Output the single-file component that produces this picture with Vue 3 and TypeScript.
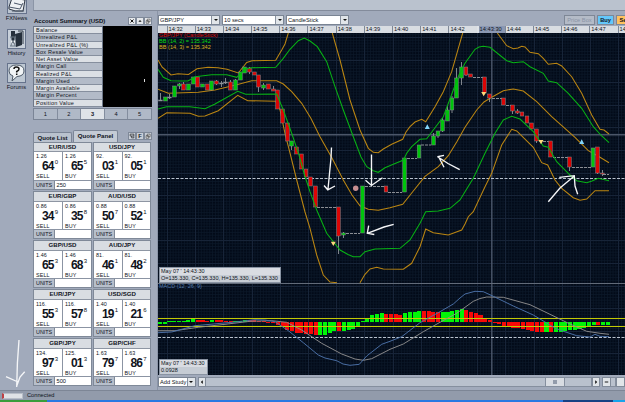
<script setup lang="ts">
interface Quote {
  pair: string
  base: string
  base2: string
  sell: string
  sellPip: string
  buy: string
  buyPip: string
  units: string
}

const accountRows: string[] = [
  'Balance', 'Unrealized P&L', 'Unrealized P&L (%)', 'Box Resale Value', 'Net Asset Value',
  'Margin Call', 'Realized P&L', 'Margin Used', 'Margin Available', 'Margin Percent', 'Position Value',
]

const q = (pair: string, base: string, base2: string, sell: string, sellPip: string, buy: string, buyPip: string, units = ''): Quote =>
  ({ pair, base, base2, sell, sellPip, buy, buyPip, units })

const quotes: Quote[] = [
  q('EUR/USD', '1.26', '1.26', '64', '0', '65', '5', '250'),
  q('USD/JPY', '92.', '92.', '03', '1', '05', '1'),
  q('EUR/GBP', '0.86', '0.86', '34', '9', '35', '8'),
  q('AUD/USD', '0.88', '0.88', '50', '7', '52', '1'),
  q('GBP/USD', '1.46', '1.46', '65', '3', '68', '3'),
  q('AUD/JPY', '81.', '81.', '46', '1', '48', '2'),
  q('EUR/JPY', '116.', '116.', '55', '3', '57', '8'),
  q('USD/SGD', '1.40', '1.40', '19', '1', '21', '6'),
  q('GBP/JPY', '134.', '125.', '97', '3', '01', '3', '500'),
  q('GBP/CHF', '1.63', '1.63', '79', '7', '86', '7'),
]

const times: string[] = [
  '14:32', '14:33', '14:34', '14:35', '14:36', '14:37', '14:38', '14:39',
  '14:40', '14:41', '14:42', '14:43:30', '14:44', '14:45', '14:46', '14:47', '14:48',
]

const majorX: number[] = Array.from({ length: 17 }, (_, i) => 167 + Math.round(i * 28.2))
const majorY: number[] = Array.from({ length: 15 }, (_, i) => 37 + Math.round(i * 22.6))

/* x centre, body top, body bottom, colour, wick top, wick bottom */
type Candle = [number, number, number, 'g' | 'r' | 'x', number?, number?]
const candles: Candle[] = [
  [160.5, 100, 101, 'x', 93, 101], [165.5, 97, 101, 'g'], [169.5, 97, 98, 'x', 94, 99],
  [174.5, 86, 97, 'g'], [179.5, 84, 86, 'g', 83, 89], [183.5, 84, 90, 'r', 82, 90], [188.5, 84, 90, 'g'],
  [193.5, 77, 84, 'g'], [197.5, 77, 87, 'r'], [202.5, 84, 87, 'g'], [207.5, 84, 90, 'r'],
  [211.5, 81, 90, 'g'], [216.5, 81, 84, 'r', 80, 85], [221.5, 83, 84, 'x', 81, 87], [225.5, 82, 83, 'x', 78, 84],
  [230.5, 82, 90, 'r', 80, 90], [235.5, 80, 90, 'g', 79, 90], [240.5, 72, 80, 'g'], [244.5, 67, 73, 'g'],
  [249.5, 68, 72, 'r', 67, 74], [254.5, 72, 75, 'r'], [258.5, 75, 87, 'r', 75, 92], [263.5, 85, 88, 'g', 83, 90],
  [268.5, 84, 89, 'r'], [273.5, 89, 91, 'r', 86, 91], [277.5, 90, 109, 'r'], [282.5, 109, 123, 'r'],
  [287.5, 123, 141, 'r'], [291.5, 141, 146, 'g', 141, 150], [296.5, 147, 154, 'r'], [301.5, 154, 169, 'r'],
  [306, 169, 177, 'r'], [310.5, 177, 186, 'r'], [315.5, 186, 207, 'r'], [338.5, 207, 236, 'r', 207, 254],
  [343.5, 233, 235, 'g', 232, 238], [362.5, 186, 233, 'g'], [386, 186, 192, 'r'], [404.5, 158, 192, 'g'],
  [419, 145, 158, 'g'], [433.5, 136, 145, 'g', 133, 145], [438, 131, 136, 'g', 131, 138], [442.5, 120, 131, 'g', 118, 132],
  [447.5, 110, 121, 'g', 106, 121], [452, 98, 110, 'g', 96, 113], [456.5, 78, 98, 'g', 68, 98],
  [461.5, 67, 78, 'g', 62, 85], [466, 67, 75, 'r', 67, 76], [470.5, 74, 77, 'r'], [484.5, 77, 93, 'r'],
  [489.5, 94, 98, 'r', 94, 102], [503.5, 98, 105, 'r'], [512.5, 105, 111, 'r', 105, 114], [517.5, 111, 113, 'r', 109, 114],
  [522, 112, 116, 'r'], [527, 116, 123, 'r'], [531.5, 123, 129, 'r'], [536.5, 129, 141, 'r', 129, 143],
  [550.5, 141, 157, 'r'], [569.5, 157, 167, 'r', 157, 171], [593, 148, 167, 'g'], [597.5, 147, 173, 'r', 147, 174],
  [602.5, 173, 174, 'r', 170, 176],
]

/* levels without trades: x from, x to, y */
const flats: [number, number, number][] = [
  [317, 336, 207.5], [346, 360, 233.5], [365, 384, 186.5], [388, 402, 192.5], [407, 417, 158.5], [421, 431, 145],
  [473, 483, 77.5], [492, 502, 98.5], [506, 511, 105.5], [539, 549, 141.5], [553, 568, 157.5], [572, 591, 167.5], [603, 609, 174.5],
]

const upperOuter1 = '158,60 162,67 171,75 178,73.7 188.5,74.5 197,68.7 208,67.3 218,67.7 227,69.3 238.3,73 246.7,62.5 252,60.7 275.7,60.3 281.7,50 285,44 288.3,33'
const upperOuter2 = '332.3,33 340,60 350,100 360,130 368.3,148.3 373.3,152.3 378.3,152.7 383.3,149 391.7,144.3 402.7,139.3 406,132 410,126.7 415,122 421.7,119.3 425.7,121.7 435,106.7 443.3,91.7 451.7,71.7 458.3,48.3 462.7,33'
const upperOuter3 = '497.3,33 506.7,45.7 513.3,48.7 518,48 521.7,46.3 525,47 530,52.3 538.3,53.7 543.3,58.3 548.3,64.3 556.7,63.3 561.7,66 571.7,76.7 581.7,93.3 591.7,115 600,129.3 604,130 609,134'
const upperInner = '158,69.3 163.3,77.3 171,80.7 180,81 188,81 195,76.7 211.7,74.7 226.7,74.7 236.7,77.3 245,69.3 251.7,67.7 275.7,67.3 283.3,58.3 290,49.3 298.3,40.7 304.3,38 310,41 317.3,46.7 326.7,61.7 335,86.7 343.3,110 353.3,136.7 361,157 366.7,166.7 373.3,170.7 378.3,172.3 385,167.7 393.3,164.3 403.5,160 406.7,153.3 411.7,146.7 420,139.3 426.7,138.7 433.3,130 443.3,116.7 453.3,90 459,75 465,63.3 475,49.3 479,47 483.3,46.3 490,47.3 506.7,60.7 513.3,62.7 523.3,61.7 530,66.7 543.3,73.3 548.3,81 556.7,82.7 568.3,93.3 581.7,108.3 593.3,126.7 601.7,136 609,142.7'
const middle = '158,89.3 168.3,93.3 198.3,92.3 215,90 236.7,84.7 251.7,80.7 276.7,80.7 283.3,84 291.7,91.7 301.7,103.3 311,118.5 320,136.7 331.7,157.5 343.3,180 352,195 360,205.7 368.3,209.3 378.3,210.3 390,207.7 402.7,204.3 413.3,191 425,176.3 438.3,166.7 448.3,155.7 456.7,142 465,127.3 476.7,110 484,102 491.7,97.3 503.3,90.7 513.3,89 523.3,91 536.7,101.7 551.7,116.7 575,137.3 588.3,150.7 600,157.3 609,162.7'
const lowerInner = '158,109 166.7,106.7 190,106.7 205,108.7 215,104 237.7,91.3 245.7,94.3 276.7,94 283.3,110 291.7,133.3 299,155 304.5,175 310,191.7 316.7,210 326.7,233.3 340,250 348,254.5 353.3,256.7 360,256.7 365,251.7 375,249 400,248.3 410,240 420,223.3 425.7,211.7 438.3,211 450,208.3 460,200 465,191.7 473.3,178.3 485,153.3 495,133.3 503.3,120 511.7,116.3 520,119 533.3,131.7 543.3,146 548.3,147.3 556.7,161.7 570,175 576.7,180.7 586.7,182.7 592,181 598.3,178.3 609,180.7'
const lowerOuter1 = '158,118.3 166.7,112.7 190,113.3 198.3,116.3 205,116 218.3,110.7 237.7,95.3 247.7,100.7 275.7,101.3 280,110 285,133.3 290.5,155 296.7,180 305,212 310,228.3 316.7,255 323.3,275 330,282 337,282.7'
const lowerOuter2 = '360,282.7 365,274.3 370,269 376.7,267.3 383.3,269 403.3,269.3 411.7,263.3 420,246.7 425.7,229 433.3,232.7 448.3,235 461.7,230 465,224 468.3,216.7 473.3,211.7 485,186.7 491.7,173.3 501.7,145 511.7,129.3 516.7,131 533.3,147.3 541.7,162.7 547.7,165 555,180 561.7,188.3 573.3,197.7 580,200.3 586.7,199 595,190.7 609,190.7'

const outerLines = [upperOuter1, upperOuter2, upperOuter3, middle, lowerOuter1, lowerOuter2]

const macdLine = '158,332.7 171.7,332 195,325.7 235,322 255,319.7 265,320 275,321.7 288.3,330.7 303.3,342.7 318.3,355 325,358 336.7,360.7 343,364 350,365.3 359.3,364.3 366.7,356 381.7,344.3 390,341.3 401.7,336.7 420,322.7 440,311.7 453.3,304 460,298 465,294 475,291.3 483.3,291.7 493.3,296.3 513.3,306 533.3,315 556.7,329 576.7,335.7 590,337 595,334.3 600,336.3 609,336.7'
const signalLine = '158,330.7 175,330.7 198.3,327.3 225,324.3 250,321.3 271.7,320.7 286.7,322.3 301.7,330 321.7,343.3 341.7,354 355,359 363.3,360.3 371.7,358.7 390,349.3 403.3,344 423.3,331.7 440,322.3 456.7,313.3 473.3,301.3 480,298.5 486.7,297 503.3,297.3 530,304.7 550,314.3 570,324 586.7,331.3 600,333.3 609,334.3'

const heights: number[] = [
  -2.3, -1.7, 0.7, 1, 1, 1.3, 1.7, 2.7, 1.7, 1.7, 1.3, 1.7, 1.7, 1.7, 1.3, 1, 1, 1.3, 1.7, 2, 2, 1.3, 0.7, -0.7, -1, -3,
  -5, -8.3, -9.3, -10.7, -10.7, -11.7, -12.3, -13.3, -13.3, -12.7, -11, -9.3, -9.3, -9, -8, -7, -4.3, 1, 3.7, 6.7, 7.7, 8.7,
  8, 8, 8, 6.7, 9.3, 9.7, 9.7, 11, 11.3, 10.7, 9.7, 9.7, 9.7, 9.7, 10.7, 11.7, 12.7, 11.7, 9.7, 8.7, 6.7, 3.3, 1.7,
  -1, -2.3, -4, -5, -6, -6.3, -7.3, -8, -9, -10, -10, -10, -10, -10, -10, -9.3, -8.3, -8.3, -7.3, -6.3, -4.7, -3, -3, -3, -3,
]
const tones =
  'gggggggg' + 'rrr' + 'g' + 'rrrr' + 'ggg' + 'rrrrrrrrrrrrrrr' + 'gggg' + 'r' + 'ggggggggg' + 'rrrr' + 'gggg' + 'rrrr' + 'ggggg' +
  'rrrrrrrrrrrrrrrrr' + 'g' + 'r' + 'ggggggggg' + 'r' + 'gg'
const bars = heights.map((h, i) => ({
  x: 158 + i * 4.713,
  y: h > 0 ? 322 - h : 322,
  h: Math.abs(h),
  tone: tones[i],
}))
</script>

<template>
  <div class="app">
    <div class="main">
      <nav class="sidebar">
        <div class="tool news">
          <svg width="20" height="20" viewBox="0 0 20 20">
            <rect x=".5" y=".5" width="19" height="19" fill="#bcc5d1" stroke="#66738c" />
            <path d="M2 13L5 4L18 6L16 17Q8 18 2 15Z" fill="#eef1f4" stroke="#2d3542" />
            <path d="M2 13L13 15L16 9M7 9L15 11M5 17H17" fill="none" stroke="#4c586a" />
          </svg>
          <span>FXNews</span>
        </div>
        <div class="tool history">
          <svg width="19" height="20" viewBox="0 0 19 20">
            <rect x=".5" y=".5" width="18" height="19" fill="#c8d0da" stroke="#66738c" />
            <path d="M4 2L8 2V15L4 13ZM8 5L15 3V16L9 18Z" fill="#26303c" />
            <path d="M11 2H16V15" fill="none" stroke="#323d49" />
            <path d="M3 8H9M3 17H9M4 8Q4 11 6 12.5Q4 14 4 17M8 8Q8 11 6 12.5Q8 14 8 17" fill="#f2f5f7" stroke="#6d7a87" />
          </svg>
          <span>History</span>
        </div>
        <div class="tool forums">
          <svg width="19" height="20" viewBox="0 0 19 20">
            <rect x=".5" y=".5" width="18" height="19" fill="#bdc7d2" stroke="#66738c" />
            <path d="M9.5 2Q17 2 17 8Q17 13 10 13.5L5 18L6 13Q2 12 2 8Q2 2 9.5 2Z" fill="#f1f4f6" stroke="#4c5867" />
            <path d="M7 6Q7 4 9.3 4Q12 4 12 6Q12 7.4 9.7 8.5V9.5M9.7 10.6V12" fill="none" stroke="#111" stroke-width="1.5" />
          </svg>
          <span>Forums</span>
        </div>
        <svg class="sketch" width="26" height="50" viewBox="0 338 26 50">
          <path d="M19 340L17.4 363L16.7 387M6 376.7L18 382M16.7 386L20 377L24.7 371.7" />
        </svg>
      </nav>

      <div class="workspace">
        <div class="top-strip"></div>
        <div class="body">
          <aside class="panels">
            <div class="panel-head">
              <span class="title">Account Summary (USD)</span>
              <span class="mini">
                <svg viewBox="0 0 7 8"><path d="M1.5 2L5.5 6M5.5 2L1.5 6" stroke="#111" stroke-width="1.3" /></svg>
              </span>
              <span class="mini">
                <svg viewBox="0 0 7 8"><path d="M1.3 5L3.5 2.8L5.7 5Z" fill="#111" /></svg>
              </span>
              <span class="mini">
                <svg viewBox="0 0 7 8"><path d="M2.5 1.5H6.3V5H2.5ZM1 3.5H4.5V7H1Z" fill="#eee" stroke="#222" stroke-width=".7" /></svg>
              </span>
            </div>
            <div class="account">
              <div class="labels">
                <div v-for="row in accountRows" :key="row" class="row">{{ row }}</div>
              </div>
              <div class="redacted"><i></i></div>
            </div>
            <div class="pager">
              <span v-for="n in 5" :key="n" :class="{ on: n === 3 }">{{ n }}</span>
            </div>
            <div class="tabs">
              <span class="tab">Quote List</span>
              <span class="tab on">Quote Panel</span>
              <span class="grow"></span>
              <span class="mini dim">
                <svg viewBox="0 0 7 8"><path d="M1 1.5H6V4H1ZM3 4V6.5H6V4.5" fill="none" stroke="#111" stroke-width=".8" /></svg>
              </span>
              <span class="mini dim">F</span>
              <span class="mini dim">
                <svg viewBox="0 0 7 8"><path d="M2.5 1.5H6.3V5H2.5ZM1 3.5H4.5V7H1Z" fill="#eee" stroke="#222" stroke-width=".7" /></svg>
              </span>
            </div>
            <div class="quotes">
              <div v-for="c in quotes" :key="c.pair" class="card">
                <div class="pair">{{ c.pair }}</div>
                <div class="prices">
                  <div class="side">
                    <small>{{ c.base }}</small>
                    <b>{{ c.sell }}<sup>{{ c.sellPip }}</sup></b>
                    <small>SELL</small>
                  </div>
                  <div class="side">
                    <small>{{ c.base2 }}</small>
                    <b>{{ c.buy }}<sup>{{ c.buyPip }}</sup></b>
                    <small>BUY</small>
                  </div>
                </div>
                <div class="units"><span>UNITS</span><em>{{ c.units }}</em></div>
              </div>
            </div>
          </aside>

          <section class="chart-area">
            <div class="toolbar">
              <div class="select pair-select"><span>GBP/JPY</span><i></i></div>
              <div class="select secs"><span>10 secs</span><i></i></div>
              <div class="select kind"><span>CandleStick</span><i></i></div>
              <span class="grow"></span>
              <span class="btn price">Price Box</span>
              <span class="btn buy">Buy</span>
              <span class="btn sell">Sell</span>
            </div>
            <div class="axis">
              <span v-for="t in times" :key="t" :class="{ cursor: t.length > 5 }">{{ t }}</span>
            </div>
            <div class="plot">
              <svg width="467" height="342" viewBox="158 33 467 342">
                <defs>
                  <pattern id="fine" x="167" y="37" width="2.82" height="2.825" patternUnits="userSpaceOnUse">
                    <path d="M0 .4H2.82M.4 0V2.83" stroke="#0b1828" stroke-width=".8" />
                  </pattern>
                </defs>
                <rect x="158" y="33" width="467" height="342" fill="#020a18" />
                <rect x="158" y="33" width="467" height="342" fill="url(#fine)" />
                <g shape-rendering="crispEdges" stroke="#172438">
                  <path v-for="x in majorX" :key="'x' + x" :d="`M${x + 0.5} 33V375`" />
                  <path v-for="y in majorY" :key="'y' + y" :d="`M158 ${y + 0.5}H625`" />
                </g>
                <path d="M158 134.8H625M491.8 33V375" stroke="#4b5669" stroke-width="1.4" />
                <path d="M158 178.5H625M158 337.5H625" stroke="#b9c2ce" stroke-dasharray="3 1.5" />
                <g fill="none" stroke-width="1.05">
                  <polyline v-for="(p, i) in outerLines" :key="i" :points="p" stroke="#bb8612" />
                </g>
                <path v-for="(f, i) in flats" :key="'f' + i" :d="`M${f[0]} ${f[2]}H${f[1]}`" stroke="#8b8e94" stroke-dasharray="3 1" />
                <g v-for="(c, i) in candles" :key="'c' + i">
                  <path v-if="c[4] !== undefined" :d="`M${c[0]} ${c[4]}V${c[5]}`" stroke="#8e9399" stroke-width=".9" />
                  <rect
                    :x="c[0] - 1.8" :y="c[1]" width="3.6" :height="c[2] - c[1]"
                    :fill="c[3] === 'g' ? '#00c40c' : c[3] === 'r' ? '#dc0505' : '#9a9ea5'"
                    stroke="#80868a" stroke-width=".5"
                  />
                </g>
                <polyline :points="upperInner" fill="none" stroke="#07b214" stroke-width="1.05" />
                <polyline :points="lowerInner" fill="none" stroke="#07b214" stroke-width="1.05" />
                <path d="M330.8 241.7h5L333.3 246ZM481.2 92h5L483.7 96.3ZM538.5 140h5L541 144.3Z" fill="#ffd77b" />
                <path d="M424.8 129h5L427.3 124.2ZM579.2 144h5L581.7 139.2Z" fill="#82d5fa" />
                <circle cx="355.7" cy="188.3" r="2.7" fill="#c68e91" />

                <rect x="158" y="283" width="467" height="1" fill="#626b79" />
                <g shape-rendering="crispEdges">
                  <rect v-for="(b, i) in bars" :key="'b' + i" :x="b.x" :y="b.y" width="4.1" :height="b.h" :fill="b.tone === 'g' ? '#00f507' : '#f80808'" />
                </g>
                <path d="M158 318.5H625M158 326.5H625" stroke="#c3c904" />
                <polyline :points="signalLine" fill="none" stroke="#8d8c8c" stroke-width=".95" />
                <polyline :points="macdLine" fill="none" stroke="#4c72aa" stroke-width=".95" />

                <g class="ink">
                  <path d="M331.5 147.5L331 158L328 189M324 185.5L327.8 189.8L335 186" />
                  <path d="M371.5 154.5V185.5M365.5 180.3L371.5 185.5L382.5 177.7" />
                  <path d="M393.7 224.3L384 227L367.3 233.3M368.7 225.7L367.3 233.3L374.3 234.5" />
                  <path d="M459.7 169.7L448 163.5L437.3 156.5M444 155.3L438.5 156.5L444 167.3" />
                  <path d="M548.3 201.7L560 188L574.3 176M559.3 177.3L574.3 175.7L575 186L577.7 194.3" />
                </g>
              </svg>
              <div class="legend">
                <div class="red">GBP/JPY (CandleStick)</div>
                <div class="green">BB (14, 2) = 135.342</div>
                <div class="gold">BB (14, 3) = 135.342</div>
              </div>
              <div class="tip ohlc">
                <div>May 07 ' 14:43:30</div>
                <div>O=135.330, C=135.330, H=135.330, L=135.330</div>
              </div>
              <div class="macd-name">MACD (12, 26, 9)</div>
              <div class="tip macd-tip">
                <div>May 07 ' 14:43:30</div>
                <div>0.0928</div>
              </div>
            </div>
            <div class="scroll">
              <div class="select study"><span>Add Study</span><i></i></div>
              <span class="step prev"><svg viewBox="0 0 8 9"><path d="M5 2V7L2.5 4.5Z" /></svg></span>
              <div class="track"><span class="thumb"><i></i></span></div>
              <span class="step next"><svg viewBox="0 0 8 9"><path d="M3 2V7L5.5 4.5Z" /></svg></span>
              <span class="step minus"><svg viewBox="0 0 8 9"><path d="M2 4H6V5H2Z" /></svg></span>
              <span class="zoom-track"></span>
              <span class="step last"></span>
            </div>
          </section>
        </div>
      </div>
    </div>
    <footer class="status">
      <span class="meter"></span>
      <span>Connected</span>
    </footer>
    <div class="taskbar"><span class="start"></span><span class="grow"></span><span class="task"></span><span class="tray"></span></div>
  </div>
</template>

<style>
html,
body {
  margin: 0;
  overflow: hidden;
}
</style>

<style scoped>
* {
  box-sizing: border-box;
}
.app {
  width: 625px;
  height: 402px;
  overflow: hidden;
  display: flex;
  flex-direction: column;
  background: #a1aabb;
  color: #10141c;
  font: 5.7px/7px 'Liberation Sans', Arial, sans-serif;
  white-space: nowrap;
}
.grow {
  flex: 1;
}
.main {
  display: flex;
  height: 390px;
}
.sidebar {
  width: 33px;
  display: flex;
  flex-direction: column;
}
.tool {
  display: flex;
  flex-direction: column;
  align-items: center;
  height: 34px;
  flex: none;
  line-height: 8px;
}
.tool svg {
  display: block;
  flex: none;
}
.news {
  margin-top: -6px;
}
.history {
  margin-top: 1px;
}
.sketch {
  margin-top: auto;
  margin-bottom: 2px;
}
.sketch path,
.ink path {
  fill: none;
  stroke: #f5f6f8;
  stroke-width: 1.35;
}
.workspace {
  flex: 1;
  min-width: 0;
}
.top-strip {
  height: 11px;
  background: #bac2ce;
  border-left: 1px solid #8b95a6;
  border-bottom: 1px solid #838b9b;
}
.body {
  display: flex;
  height: 379px;
}
.panels {
  width: 125px;
  padding: 5px 6px 0 0;
  border-right: 1px solid #8a94a7;
  flex: none;
}
.panel-head {
  display: flex;
  align-items: center;
  height: 10px;
  width: 119px;
}
.title {
  flex: 1;
  padding-left: 1px;
  font-size: 6px;
  font-weight: 700;
}
.mini {
  width: 8px;
  flex: none;
  height: 8px;
  background: #e4e7eb;
  border: 0.5px solid #7f8999;
  font-weight: 700;
  text-align: center;
  line-height: 7px;
}
.mini svg {
  display: block;
  width: 100%;
  height: 100%;
}
.mini.dim {
  background: #c8ced7;
}
.account {
  display: flex;
  height: 81px;
  width: 119px;
}
.labels {
  width: 70px;
  display: flex;
  flex-direction: column;
  border: 1px solid #6e7889;
  border-bottom: 0;
}
.row {
  flex: 1 1 0;
  min-height: 0;
  padding-left: 2px;
  line-height: 6px;
  font-size: 5.5px;
  letter-spacing: 0.24px;
  background: #b3bbc8;
  border-bottom: 1px solid #868f9e;
}
.row:nth-child(odd) {
  background: #dce0e5;
}
.redacted {
  flex: 1;
  background: #000;
  padding: 53px 0 0 41px;
}
.redacted i {
  display: block;
  width: 1px;
  height: 3px;
  background: #dedede;
}
.pager {
  display: flex;
  width: 119px;
  height: 12px;
  margin-top: 1px;
  border: 1px solid #7b8596;
}
.pager span {
  flex: 1;
  text-align: center;
  line-height: 10px;
  background: #b0b9c7;
  border-right: 1px solid #838d9e;
}
.pager span:last-child {
  border-right: 0;
}
.pager .on {
  background: #dfe3e8;
  font-weight: 700;
}
.tabs {
  display: flex;
  align-items: center;
  width: 119px;
  height: 12px;
  margin-top: 10px;
}
.tab {
  align-self: flex-end;
  width: 39px;
  height: 10px;
  border: 1px solid #7b8596;
  border-bottom: 0;
  border-radius: 2px 2px 0 0;
  background: #bac2ce;
  text-align: center;
  font-size: 6.1px;
  font-weight: 700;
  line-height: 9px;
}
.tab.on {
  width: 45px;
  height: 12px;
  margin-left: 1px;
  background: #c4cbd5;
  line-height: 9px;
}
.quotes {
  display: grid;
  grid-template-columns: 59px 58px;
  column-gap: 1px;
  grid-auto-rows: 49.1px;
  width: 119px;
}
.card {
  height: 48.1px;
  border: 1px solid #7f8998;
  background: #fff;
  display: flex;
  flex-direction: column;
}
.pair {
  height: 9.5px;
  background: #d9dde2;
  border-bottom: 1px solid #8e96a3;
  text-align: center;
  font-size: 6.1px;
  font-weight: 700;
  line-height: 8px;
}
.prices {
  display: flex;
  height: 28px;
}
.side {
  flex: 1;
  padding: 1px 0 0 2px;
  display: flex;
  flex-direction: column;
}
.side + .side {
  border-left: 1px solid #8b94a3;
}
.side small {
  font-size: 5.4px;
  line-height: 6px;
  letter-spacing: 0.1px;
}
.side b {
  display: flex;
  padding-left: 6px;
  font-size: 12px;
  letter-spacing: -0.8px;
  line-height: 14px;
}
.side sup {
  margin-left: 1px;
  font-size: 6px;
  letter-spacing: 0;
  line-height: 7px;
  font-weight: 400;
}
.units {
  flex: 1;
  display: flex;
  line-height: 8px;
  border-top: 1px solid #8b94a3;
}
.units span {
  width: 21px;
  padding-left: 2px;
  background: #b7bfcb;
  border-right: 1px solid #7f8998;
  font-size: 5.4px;
}
.units em {
  flex: 1;
  padding-left: 1.5px;
  font-style: normal;
}
.chart-area {
  flex: 1;
  min-width: 0;
  overflow: hidden;
}
.toolbar {
  display: flex;
  height: 15px;
  padding-top: 4px;
}
.select {
  height: 10px;
  display: flex;
  background: #fff;
  border: 1px solid #7a8493;
  line-height: 8px;
}
.select span {
  flex: 1;
  padding-left: 1px;
}
.select i {
  width: 8px;
  border-left: 1px solid #8992a0;
  background: #e1e5e9;
  display: flex;
  align-items: center;
  justify-content: center;
}
.select i::after {
  content: '';
  border: 2px solid transparent;
  border-top: 2.5px solid #111;
  border-bottom: 0;
}
.pair-select {
  width: 62px;
  margin-right: 2px;
}
.secs {
  width: 62px;
  margin-right: 2px;
}
.kind {
  width: 63px;
}
.btn {
  height: 10px;
  border: 1px solid #7e8796;
  text-align: center;
  line-height: 8px;
  font-weight: 700;
  flex: none;
}
.price {
  width: 31px;
  background: #b4bbc7;
  color: #8a94a6;
  font-weight: 400;
}
.buy {
  width: 17px;
  margin: 0 2px;
  background: #64c7fa;
}
.sell {
  width: 17px;
  margin-right: -8px;
  background: #ffc15f;
}
.axis {
  height: 7px;
  display: flex;
  padding-left: 8.5px;
  background: #d9dde2;
  line-height: 7px;
}
.axis span {
  width: 28.2px;
  flex: none;
  border-left: 1px solid #7f8998;
  padding-left: 1px;
}
.axis .cursor {
  background: #8b98b3;
  border-left: 2px solid #dfe3e8;
}
.plot {
  position: relative;
  height: 342px;
}
.plot svg {
  display: block;
}
.legend {
  position: absolute;
  left: 1px;
  top: 0;
  font-size: 5.6px;
  line-height: 5.9px;
}
.red {
  color: #dd0b0b;
}
.green {
  color: #08d912;
}
.gold {
  color: #d8b01e;
}
.tip {
  position: absolute;
  left: 1px;
  border: 1px solid #8993a2;
  background: #c6ccd4;
  font-size: 5.5px;
  line-height: 7px;
}
.tip div {
  padding-left: 1px;
}
.tip div:first-child {
  background: #d9dce2;
}
.ohlc {
  top: 234px;
  width: 122px;
}
.macd-name {
  position: absolute;
  left: 1px;
  top: 250px;
  font-size: 5.5px;
  color: #547bad;
}
.macd-tip {
  top: 326px;
  width: 49px;
}
.scroll {
  display: flex;
  height: 12px;
  padding-top: 2px;
}
.study {
  width: 40px;
  margin-right: 2px;
}
.step {
  width: 9px;
  height: 10px;
  flex: none;
  background: #e1e5e9;
  border: 1px solid #818b9a;
}
.step svg {
  display: block;
  width: 100%;
  height: 100%;
}
.track {
  width: 389px;
  height: 10px;
  background: #b9c1cd;
  border: 1px solid #858f9e;
  border-left: 0;
  padding-left: 339px;
}
.thumb {
  width: 20px;
  height: 8px;
  display: flex;
  align-items: center;
  justify-content: center;
  background: #d8dce2;
  border-left: 1px solid #858f9e;
  border-right: 1px solid #858f9e;
}
.thumb i {
  width: 4px;
  height: 4px;
  background: #929baa;
}
.prev {
  width: 8px;
}
.next {
  width: 8px;
}
.minus {
  margin-left: 2px;
}
.zoom-track {
  width: 5px;
  height: 10px;
  background: #bac2ce;
  border: 1px solid #858f9e;
  border-left: 0;
}
.status {
  height: 10px;
  display: flex;
  align-items: center;
  gap: 4px;
  padding-left: 2px;
  background: #929bab;
  border-top: 1px solid #7d8696;
}
.meter {
  width: 21px;
  height: 6px;
  background: #dfe2e6;
  border: 1px solid #b8bec8;
  border-left: 2px solid #bd3e43;
}
.taskbar {
  height: 2px;
  display: flex;
  background: #2979e2;
}
.start {
  width: 47px;
  background: #3a9d3c;
}
.task {
  width: 50px;
  background: #174184;
}
.tray {
  width: 12px;
  background: #18a3ea;
}
</style>
